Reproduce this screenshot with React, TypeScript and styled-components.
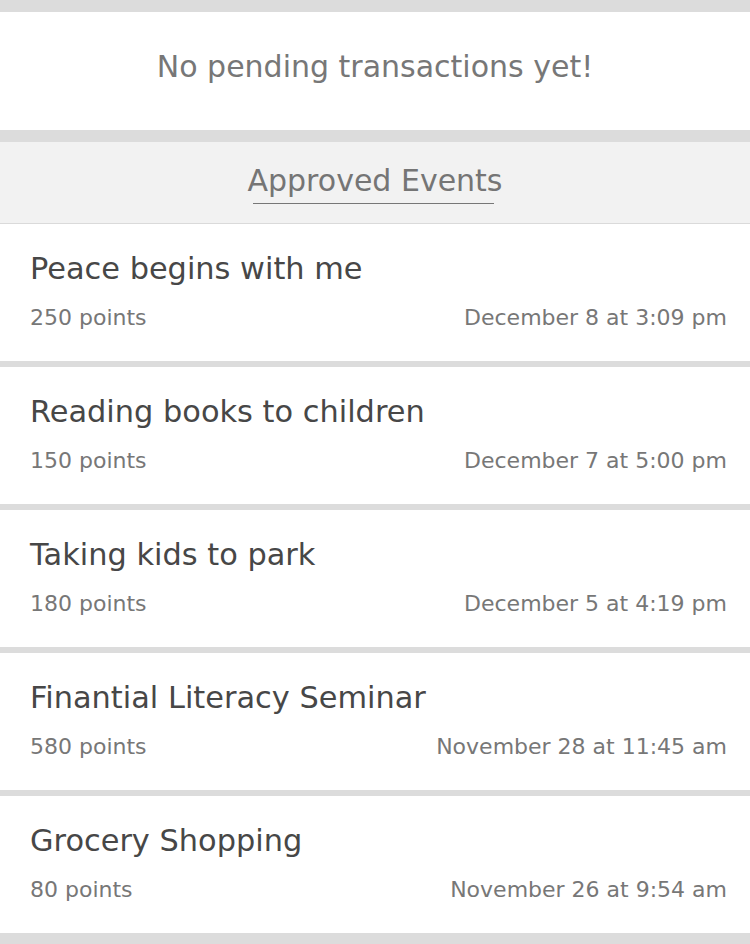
import React from "react";
import styled, { createGlobalStyle } from "styled-components";

const Global = createGlobalStyle`
  html, body { margin: 0; padding: 0; background: #dcdcdc; }
  body { font-family: "DejaVu Sans", "Liberation Sans", sans-serif; }
`;

const Page = styled.div`
  display: flex;
  flex-direction: column;
  background: #dcdcdc;
  padding: 12px 0 11px;
`;

const EmptyPanel = styled.div`
  background: #fff;
  height: 118px;
  box-sizing: border-box;
  padding-top: 37px;
  margin-bottom: 12px;
  text-align: center;
  color: #777;
  font-size: 30px;
  line-height: 36px;
`;

const SectionHeader = styled.div`
  background: #f2f2f2;
  height: 82px;
  border-bottom: 1px solid #dadada;
  box-sizing: border-box;
  display: flex;
  justify-content: center;
  align-items: flex-start;
`;

const HeaderTitle = styled.h2`
  margin: 21px 0 0;
  font-weight: normal;
  font-size: 30px;
  line-height: 36px;
  color: #757575;
  &::after {
    content: "";
    display: block;
    height: 1px;
    background: #777;
    margin: 4px 9px 0 5px;
  }
`;

const List = styled.div`
  display: flex;
  flex-direction: column;
  gap: 6px;
`;

const Item = styled.div`
  background: #fff;
  height: 137px;
  box-sizing: border-box;
  padding: 27px 23px 0 30px;
  display: flex;
  flex-direction: column;
`;

const ItemTitle = styled.div`
  font-size: 30.4px;
  line-height: 36px;
  color: #474747;
`;

const Meta = styled.div`
  display: flex;
  justify-content: space-between;
  margin-top: 17px;
  font-size: 22px;
  line-height: 28px;
  color: #777;
`;

const events = [
  { title: "Peace begins with me", points: 250, date: "December 8 at 3:09 pm" },
  { title: "Reading books to children", points: 150, date: "December 7 at 5:00 pm" },
  { title: "Taking kids to park", points: 180, date: "December 5 at 4:19 pm" },
  { title: "Finantial Literacy Seminar", points: 580, date: "November 28 at 11:45 am" },
  { title: "Grocery Shopping", points: 80, date: "November 26 at 9:54 am" },
];

export default function App() {
  return (
    <>
      <Global />
      <Page>
        <EmptyPanel>No pending transactions yet!</EmptyPanel>
        <SectionHeader>
          <HeaderTitle>Approved Events</HeaderTitle>
        </SectionHeader>
        <List>
          {events.map((e) => (
            <Item key={e.title}>
              <ItemTitle>{e.title}</ItemTitle>
              <Meta>
                <span>{e.points} points</span>
                <span>{e.date}</span>
              </Meta>
            </Item>
          ))}
        </List>
      </Page>
    </>
  );
}
